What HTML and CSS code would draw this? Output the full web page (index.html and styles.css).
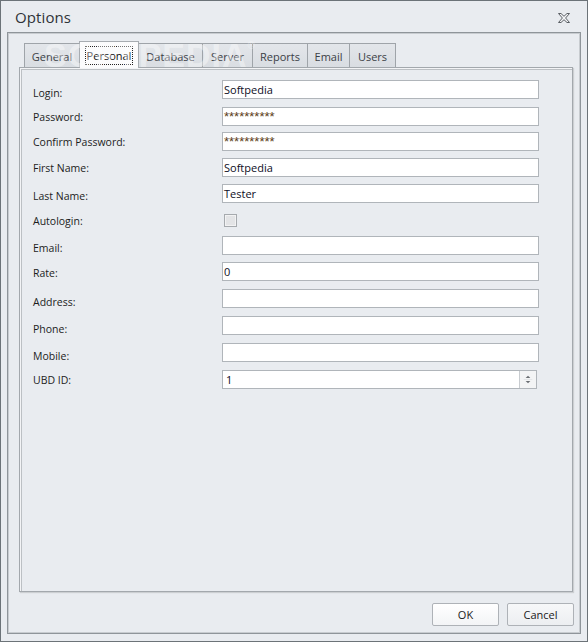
FILE: index.html
```html
<!DOCTYPE html>
<html>
<head>
<meta charset="utf-8">
<link rel="stylesheet" href="styles.css">
</head>
<body>
<div class="window">
  <div class="titlebar">
    <span class="title">Options</span>
    <span class="close">
      <svg width="12" height="10" viewBox="0 0 12 10"><path d="M0.5 0.5 H3 L6 3.3 L9 0.5 H11.5 L7.6 5 L11.5 9.5 H9 L6 6.7 L3 9.5 H0.5 L4.4 5 Z" fill="#f4f5f7" stroke="#5a5f64" stroke-width="1" stroke-linejoin="miter"/></svg>
    </span>
  </div>
  <div class="frame">
    <div class="watermark">SOFTPEDIA<sup>®</sup></div>
    <div class="tabs">
      <div class="tab w-general">General</div>
      <div class="tab sel w-personal"><span class="focus">Personal</span></div>
      <div class="tab w-database">Database</div>
      <div class="tab w-server">Server</div>
      <div class="tab w-reports">Reports</div>
      <div class="tab w-email">Email</div>
      <div class="tab w-users">Users</div>
    </div>
    <div class="pane">
      <div class="form">
        <div class="row"><label class="lbl d3">Login:</label><div class="input">Softpedia</div></div>
        <div class="row mt1"><label class="lbl">Password:</label><div class="input pwd">**********</div></div>
        <div class="row mtm1"><label class="lbl">Confirm Password:</label><div class="input pwd">**********</div></div>
        <div class="row"><label class="lbl">First Name:</label><div class="input">Softpedia</div></div>
        <div class="row"><label class="lbl d2">Last Name:</label><div class="input">Tester</div></div>
        <div class="row"><label class="lbl d1">Autologin:</label><div class="checkcell"><span class="check"></span></div></div>
        <div class="row"><label class="lbl d2">Email:</label><div class="input"></div></div>
        <div class="row"><label class="lbl d1">Rate:</label><div class="input">0</div></div>
        <div class="row mt1"><label class="lbl d3">Address:</label><div class="input"></div></div>
        <div class="row mt1"><label class="lbl d3">Phone:</label><div class="input"></div></div>
        <div class="row mt1"><label class="lbl d3">Mobile:</label><div class="input"></div></div>
        <div class="row mt1"><label class="lbl">UBD ID:</label>
          <div class="input spin"><span class="spinval">1</span>
            <span class="spinbtn">
              <svg width="17" height="17" viewBox="0 0 17 17"><path d="M6 7 L11 7 L8.5 4.5 Z" fill="#6a6e72"/><line x1="4" y1="8.5" x2="13" y2="8.5" stroke="#e2e4e6"/><path d="M6 10 L11 10 L8.5 12.5 Z" fill="#6a6e72"/></svg>
            </span>
          </div>
        </div>
      </div>
    </div>
    <div class="buttons">
      <div class="btn default">OK</div>
      <div class="btn">Cancel</div>
    </div>
  </div>
</div>
</body>
</html>
```
FILE: styles.css
```css
* { box-sizing: border-box; }
html, body { margin: 0; padding: 0; }
body {
  width: 588px;
  height: 642px;
  font-family: "Open Sans", "Noto Sans", "Liberation Sans", sans-serif;
  font-size: 10.5px;
  color: #1e1e1e;
  background: #e9ecf0;
}
.window {
  width: 588px;
  height: 642px;
  border: 1px solid #6c7378;
  background: #e9ecf0;
  display: flex;
  flex-direction: column;
}
.titlebar {
  height: 31px;
  flex: none;
  display: flex;
  align-items: center;
  justify-content: space-between;
  padding: 1px 17px 0 14px;
}
.title {
  font-size: 15px;
  color: #2f3338;
  letter-spacing: 0.1px;
}
.close { display: flex; margin-top: 2px; }
.frame {
  flex: 1;
  margin: 0 6px 7px 6px;
  border: 1px solid #8f959a;
  box-shadow: inset 1px 1px 0 #c8ccd0, inset -1px -1px 0 #c8ccd0;
  padding: 8px 7px 7px 11px;
  display: flex;
  flex-direction: column;
  position: relative;
}
.watermark {
  position: absolute;
  left: 36px;
  top: 3px;
  font-family: "Liberation Sans", sans-serif;
  font-weight: bold;
  font-size: 34px;
  letter-spacing: 1px;
  color: rgba(255,255,255,0.4);
  z-index: 3;
  pointer-events: none;
}
.watermark sup { font-size: 10px; font-weight: normal; vertical-align: 18px; }
.tabs {
  display: flex;
  align-items: flex-end;
  height: 26px;
  padding-left: 5px;
  flex: none;
}
.tab {
  height: 24px;
  border: 1px solid #9fa4a9;
  border-bottom: none;
  border-left-width: 0;
  background: linear-gradient(#e3e6ea, #d9dde2);
  color: #3b4045;
  font-size: 11px;
  display: flex;
  align-items: center;
  justify-content: center;
  padding-top: 1px;
}
.tab.w-general { border-left-width: 1px; }
.tab.sel {
  height: 27px;
  margin-bottom: -1px;
  margin-left: -1px;
  border-left-width: 1px;
  background: #fbfbfc;
  color: #111;
  position: relative;
  z-index: 2;
  border-color: #a7acb1;
}
.w-general { width: 56px; }
.w-personal { width: 60px; }
.w-database { width: 64px; }
.w-server { width: 50px; }
.w-reports { width: 55px; }
.w-email { width: 42px; }
.w-users { width: 46px; }
.focus {
  border: 1px dotted #222;
  padding: 1px 1px;
  line-height: 15px;
}
.pane {
  flex: 1;
  border: 1px solid #a3a8ad;
  box-shadow: inset 1px 1px 0 #f3f4f6, inset 2px 2px 0 #bcc0c4, 1px 1px 1px rgba(0,0,0,0.12);
  background: #e9ecf0;
  padding: 12px 0 0 13px;
}
.form { display: flex; flex-direction: column; gap: 7px; }
.row {
  display: grid;
  grid-template-columns: 189px 317px;
  height: 19px;
}
.row.mt1 { margin-top: 1px; }
.row.mtm1 { margin-top: -1px; }
.lbl {
  display: flex;
  align-items: center;
  font-size: 10.5px;
  color: #1c1c1c;
}
.lbl.d1 { padding-top: 2px; }
.lbl.d2 { padding-top: 4px; }
.lbl.d3 { padding-top: 6px; }
.input {
  height: 19px;
  border: 1px solid #b0b5ba;
  background: #fff;
  padding-left: 1px;
  display: flex;
  align-items: center;
  font-size: 11px;
  color: #0d0d24;
}
.input.pwd {
  color: #5a3c18;
  font-family: "Liberation Sans", sans-serif;
  font-size: 13px;
  line-height: 13px;
  letter-spacing: 0;
  align-items: flex-start;
  padding-top: 2px;
}
.input.spin {
  width: 315px;
  justify-content: space-between;
  padding-right: 0;
}
.spinval { padding-left: 2px; }
.spinbtn {
  width: 17px;
  height: 17px;
  border-left: 1px solid #c8ccd0;
  background: #f3f4f5;
  display: flex;
}
.checkcell { display: flex; align-items: flex-start; padding: 4px 0 0 2px; }
.check {
  width: 13px;
  height: 13px;
  border: 1px solid #a6aaae;
  background: #e3e4e6;
  box-shadow: inset 0 0 0 1px #f2f2f3;
}
.buttons {
  flex: none;
  display: flex;
  justify-content: flex-end;
  gap: 8px;
  margin-top: 11px;
  margin-right: -1px;
}
.btn {
  width: 67px;
  height: 23px;
  border: 1px solid #aeb2b7;
  border-radius: 2px;
  background: linear-gradient(#f7f8f9, #eceef1);
  display: flex;
  align-items: center;
  justify-content: center;
  font-size: 11px;
  color: #1a1a1a;
}
.btn.default {
  background: linear-gradient(#ffffff, #f3f4f6);
}
```
